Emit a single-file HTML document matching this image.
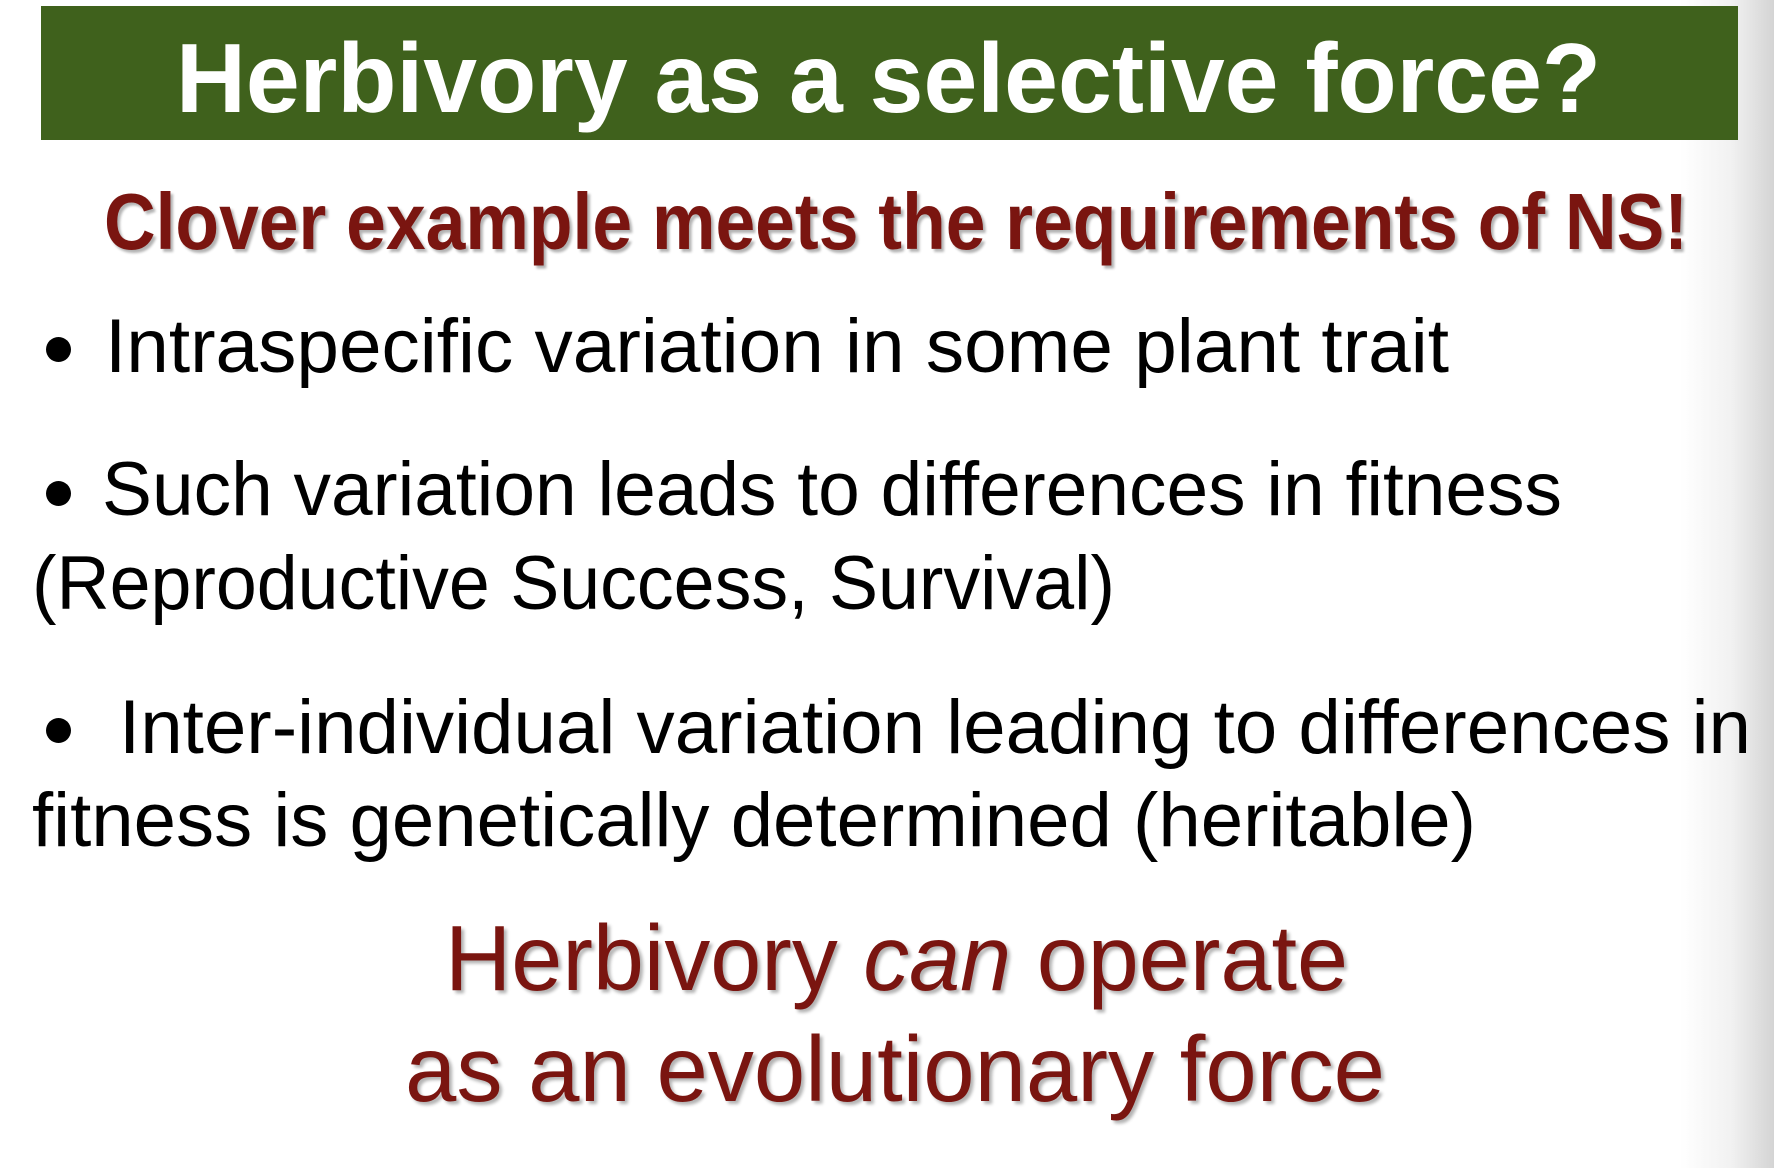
<!DOCTYPE html>
<html><head><meta charset="utf-8">
<style>
html,body{margin:0;padding:0}
body{width:1774px;height:1168px;position:relative;overflow:hidden;background:#fff;font-family:"Liberation Sans",Arial,sans-serif}
#shade{position:absolute;left:1680px;top:0;width:94px;height:1168px;background:linear-gradient(to right,rgba(255,255,255,0),rgba(200,200,200,0.25) 55%,#d4d4d4 100%)}
#bar{position:absolute;left:41px;top:6px;width:1697px;height:134px;background:#3f611c}
.t{position:absolute;white-space:nowrap;line-height:1;transform-origin:0 0}
.red{color:#7a1510;text-shadow:3px 3px 3px rgba(0,0,0,0.3)}
.dot{position:absolute;width:25px;height:25px;border-radius:50%;background:#000}
</style></head><body>
<div id="shade"></div>
<div id="bar"></div>
<div class="t" id="a" style="color:#fff;font-weight:bold;font-size:98px">Herbivory as a selective force?</div>
<div class="t red" id="b" style="font-weight:bold;font-size:80px">Clover example meets the requirements of NS!</div>
<div class="dot" style="left:46px;top:337px"></div>
<div class="t" id="c" style="font-size:76px">Intraspecific variation in some plant trait</div>
<div class="dot" style="left:46px;top:481px"></div>
<div class="t" id="d" style="font-size:76px">Such variation leads to differences in fitness</div>
<div class="t" id="e" style="font-size:76px">(Reproductive Success, Survival)</div>
<div class="dot" style="left:46px;top:718px"></div>
<div class="t" id="f" style="font-size:76px">Inter-individual variation leading to differences in</div>
<div class="t" id="g" style="font-size:76px">fitness is genetically determined (heritable)</div>
<div class="t red" id="h" style="font-size:93px">Herbivory <i>can</i> operate</div>
<div class="t red" id="i" style="font-size:93px">as an evolutionary force</div>
<script>
// id: [left, baseline, width]
var L={a:[176,113,1425],b:[104,251,1584],c:[105,374,1344],d:[102,517,1460],e:[32,611,1083],f:[119,755,1632],g:[32,848,1444],h:[445,992,903],i:[405,1103,980]};
for(var k in L){var el=document.getElementById(k),v=L[k];var fs=parseFloat(el.style.fontSize);
el.style.left=v[0]+'px';el.style.top=(v[1]-0.86*fs)+'px';
var w=el.getBoundingClientRect().width;el.style.transform='scaleX('+(v[2]/w)+')';}
</script>
</body></html>
